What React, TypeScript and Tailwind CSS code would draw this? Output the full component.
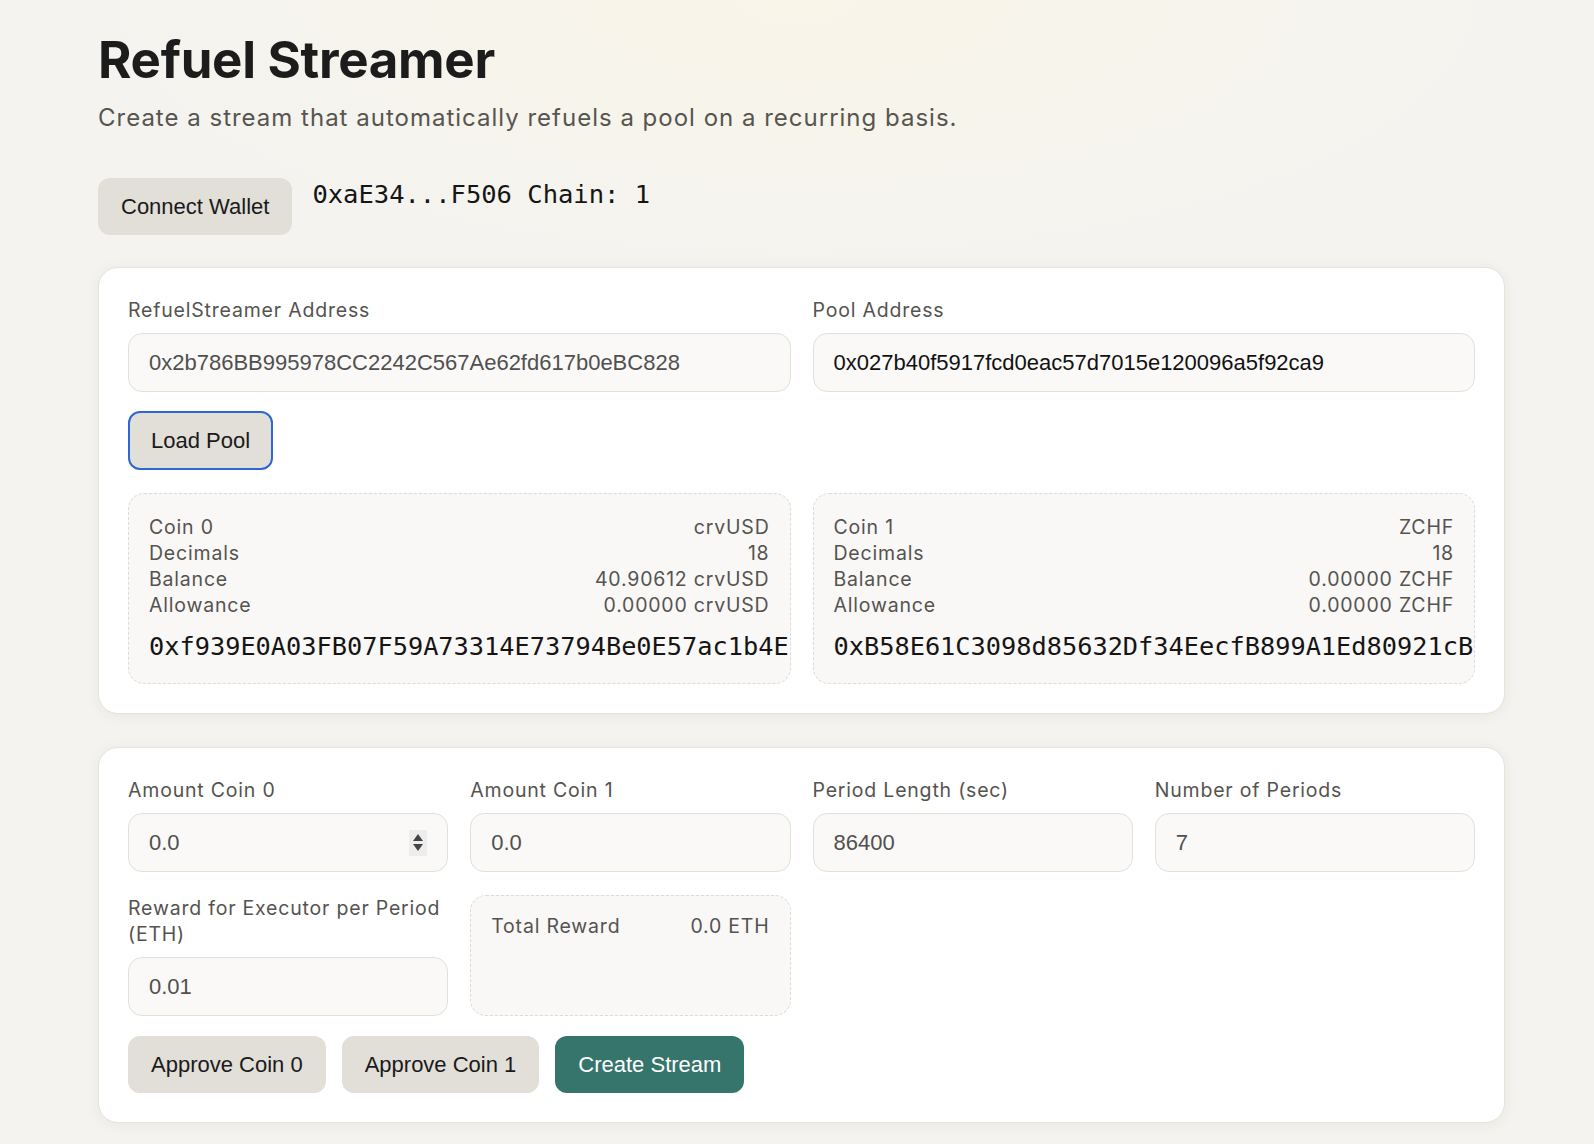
import { useState } from "react";

const sans = "font-['Inter',sans-serif]";
const helv = "font-['Liberation_Sans',Arial,sans-serif]";
const mono = "font-['DejaVu_Sans_Mono',monospace]";
const labelText = `${sans} text-[19.5px] leading-[26px] text-[#555350] tracking-[0.8px]`;

function Field({
  label,
  value,
  dark,
  spinner,
}: {
  label: string;
  value: string;
  dark?: boolean;
  spinner?: boolean;
}) {
  return (
    <div className="flex flex-col gap-[10px]">
      <label className={labelText}>{label}</label>
      <div className="relative flex items-center h-[59px] rounded-[14px] border border-[#e3e0da] bg-[#faf9f7] px-5">
        <span className={`${helv} text-[22px] ${dark ? "text-[#111]" : "text-[#505050]"}`}>{value}</span>
        {spinner && (
          <span className="absolute right-[20px] top-1/2 -translate-y-1/2 flex flex-col items-center justify-center gap-[3px] w-[18px] h-[26px] bg-[#ededed]">
            <svg width="10" height="7" viewBox="0 0 10 7">
              <path d="M5 0 L10 7 L0 7 Z" fill="#444" />
            </svg>
            <svg width="10" height="7" viewBox="0 0 10 7">
              <path d="M0 0 L10 0 L5 7 Z" fill="#444" />
            </svg>
          </span>
        )}
      </div>
    </div>
  );
}

function CoinCard({
  title,
  symbol,
  decimals,
  balance,
  allowance,
  address,
}: {
  title: string;
  symbol: string;
  decimals: string;
  balance: string;
  allowance: string;
  address: string;
}) {
  const rows = [
    [title, symbol],
    ["Decimals", decimals],
    ["Balance", balance],
    ["Allowance", allowance],
  ];
  return (
    <div className="rounded-[16px] border border-dashed border-[#dedbd5] bg-[#f9f8f6] pt-5 pb-[18px] pl-5 pr-[6px] overflow-hidden">
      {rows.map(([k, v]) => (
        <div key={k} className={`${labelText} flex justify-between pr-[14px]`}>
          <span>{k}</span>
          <span>{v}</span>
        </div>
      ))}
      <div className={`${mono} mt-[11px] text-[25.3px] leading-9 text-[#151515] whitespace-nowrap`}>{address}</div>
    </div>
  );
}

function Button({ children, primary, focused }: { children: string; primary?: boolean; focused?: boolean }) {
  return (
    <button
      className={`${helv} rounded-[12px] text-[22px] ${
        primary ? "bg-[#35756b] text-white" : "bg-[#e2ded8] text-[#1a1a1a]"
      } ${focused ? "border-2 border-[#2e66d4] px-[21px] h-[59px]" : "h-[57px] px-[23px]"}`}
    >
      {children}
    </button>
  );
}

export default function App() {
  const [amount0] = useState("0.0");

  return (
    <main className="min-h-screen bg-[#f4f3ef] bg-[radial-gradient(ellipse_700px_260px_at_50%_0%,#f9f5e9_0%,#f7f4ec_50%,#f4f3ef_100%)] pl-[98px] pt-[30px] pb-[24px]">
      <div className="w-[1407px]">
        {/* Header */}
        <h1 className={`${sans} text-[51px] leading-[60px] font-bold text-[#1c1c1c] tracking-[-0.3px]`}>Refuel Streamer</h1>
        <p className={`${sans} mt-[12px] text-[24px] leading-[32px] text-[#57554f] tracking-[1px]`}>
          Create a stream that automatically refuels a pool on a recurring basis.
        </p>

        {/* Wallet */}
        <div className="mt-[44px] flex items-start gap-[20px]">
          <Button>Connect Wallet</Button>
          <span className={`${mono} text-[25.5px] leading-[30px] text-[#151515] pt-[1px]`}>0xaE34...F506 Chain: 1</span>
        </div>

        {/* Pool card */}
        <section className="mt-[32px] rounded-[20px] border border-[#e6e3dd] bg-white p-[29px] shadow-[0_2px_14px_rgba(60,50,30,0.06)]">
          <div className="grid grid-cols-2 gap-x-[22px]">
            <Field label="RefuelStreamer Address" value="0x2b786BB995978CC2242C567Ae62fd617b0eBC828" />
            <Field label="Pool Address" value="0x027b40f5917fcd0eac57d7015e120096a5f92ca9" dark />
          </div>
          <div className="mt-[19px]">
            <Button focused>Load Pool</Button>
          </div>
          <div className="mt-[23px] grid grid-cols-2 gap-x-[22px]">
            <CoinCard
              title="Coin 0"
              symbol="crvUSD"
              decimals="18"
              balance="40.90612 crvUSD"
              allowance="0.00000 crvUSD"
              address="0xf939E0A03FB07F59A73314E73794Be0E57ac1b4E"
            />
            <CoinCard
              title="Coin 1"
              symbol="ZCHF"
              decimals="18"
              balance="0.00000 ZCHF"
              allowance="0.00000 ZCHF"
              address="0xB58E61C3098d85632Df34EecfB899A1Ed80921cB"
            />
          </div>
        </section>

        {/* Stream card */}
        <section className="mt-[33px] rounded-[20px] border border-[#e6e3dd] bg-white p-[29px] shadow-[0_2px_14px_rgba(60,50,30,0.06)]">
          <div className="grid grid-cols-4 gap-x-[22px] gap-y-[23px] items-start">
            <Field label="Amount Coin 0" value={amount0} spinner />
            <Field label="Amount Coin 1" value="0.0" />
            <Field label="Period Length (sec)" value="86400" />
            <Field label="Number of Periods" value="7" />
            <Field label="Reward for Executor per Period (ETH)" value="0.01" />
            <div className="self-stretch rounded-[16px] border border-dashed border-[#dedbd5] bg-[#f9f8f6] pt-[17px] px-5">
              <div className={`${labelText} flex justify-between`}>
                <span>Total Reward</span>
                <span>0.0 ETH</span>
              </div>
            </div>
          </div>
          <div className="mt-[20px] flex gap-4">
            <Button>Approve Coin 0</Button>
            <Button>Approve Coin 1</Button>
            <Button primary>Create Stream</Button>
          </div>
        </section>
      </div>
    </main>
  );
}
